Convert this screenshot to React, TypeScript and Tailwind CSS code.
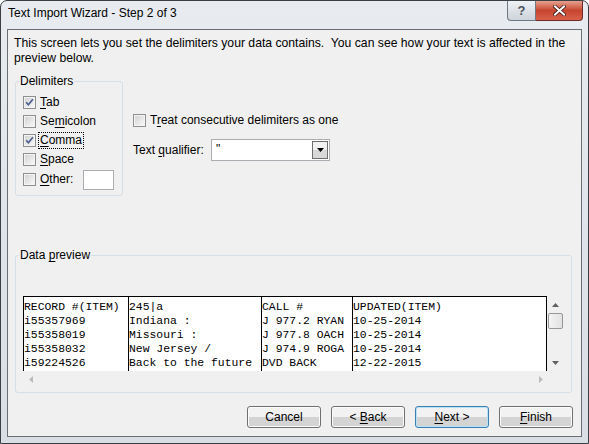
import React from "react";

const ui = "font-['Liberation_Sans',Arial,sans-serif] text-[12px] leading-[15px] text-black";
const mono = "font-['Liberation_Mono','Courier_New',monospace] text-[11.4px] leading-[14px] text-black";

const preview = [
  ["RECORD #(ITEM)", "245|a", "CALL #", "UPDATED(ITEM)"],
  ["i55357969", "Indiana :", "J 977.2 RYAN", "10-25-2014"],
  ["i55358019", "Missouri :", "J 977.8 OACH", "10-25-2014"],
  ["i55358032", "New Jersey /", "J 974.9 ROGA", "10-25-2014"],
  ["i59224526", "Back to the future", "DVD BACK", "12-22-2015"],
];

function Checkbox({ checked }: { checked?: boolean }) {
  return (
    <span className="flex h-[13px] w-[13px] shrink-0 border border-[#8e8f8f] bg-[#f4f4f4] p-[1px]">
      <span className="flex flex-1 items-center justify-center bg-gradient-to-br from-[#d4d4d4] to-[#f7f7f7]">
        {checked && (
          <svg width="9" height="9" viewBox="0 0 9 9">
            <path d="M1.2 4.3 L3.4 6.8 L7.9 1.2" stroke="#4c5f90" strokeWidth="1.7" fill="none" />
          </svg>
        )}
      </span>
    </span>
  );
}

function CheckRow({ u, rest, pre = "", checked, focus }: { u: string; rest: string; pre?: string; checked?: boolean; focus?: boolean }) {
  return (
    <div className="flex h-[19px] items-center">
      <Checkbox checked={checked} />
      <span className={`ml-[3px] px-[1px] ${focus ? "outline outline-1 outline-dotted outline-black" : ""}`}>
        {pre}
        <u className="underline-offset-2">{u}</u>
        {rest}
      </span>
    </div>
  );
}

function Arrow({ dir, color = "#606060" }: { dir: "up" | "down" | "left" | "right"; color?: string }) {
  const d = {
    up: "M0 4 L3.5 0 L7 4 Z",
    down: "M0 0 L7 0 L3.5 4 Z",
    left: "M4 0 L4 7 L0 3.5 Z",
    right: "M0 0 L4 3.5 L0 7 Z",
  }[dir];
  const vert = dir === "up" || dir === "down";
  return (
    <svg width={vert ? 7 : 4} height={vert ? 4 : 7} viewBox={vert ? "0 0 7 4" : "0 0 4 7"}>
      <path d={d} fill={color} />
    </svg>
  );
}

function Button({ children, primary }: { children: React.ReactNode; primary?: boolean }) {
  return (
    <div
      className={`flex h-[22px] w-[74px] items-center justify-center rounded-[3px] border ${
        primary ? "border-[#3c7fb1] shadow-[inset_0_0_0_1px_#b5e4f8]" : "border-[#707070] shadow-[inset_0_0_0_1px_#fcfcfc]"
      } bg-gradient-to-b from-[#f2f2f2] from-50% to-[#d4d4d4] to-50%`}
    >
      <span>{children}</span>
    </div>
  );
}

export default function App() {
  return (
    <div className={`h-[444px] w-[589px] bg-white ${ui}`}>
      <div className="flex h-full flex-col rounded-t-[7px] border border-[#3b3f44] bg-gradient-to-b from-[#e8ecf0] via-[#dfe4ea] to-[#d9dee4]">
        {/* title bar */}
        <div className="flex h-[28px] justify-between pl-[7px] pr-[5px]">
          <div className="pt-[5px]">Text Import Wizard - Step 2 of 3</div>
          <div className="flex h-[20px] items-stretch">
            <div className="flex w-[29px] items-center justify-center rounded-bl-[4px] border border-t-0 border-[#6f7780] bg-gradient-to-b from-[#eef1f4] to-[#cdd3da] text-[13px] font-bold text-[#4a5260]">
              ?
            </div>
            <div className="flex w-[47px] items-center justify-center rounded-br-[4px] border border-l-0 border-t-0 border-[#6e2a24] bg-gradient-to-b from-[#e5a08f] via-[#c7452f] to-[#d9604a]">
              <svg width="13" height="11" viewBox="0 0 13 11">
                <path d="M2 1.5 L11 9.5 M11 1.5 L2 9.5" stroke="#3b1a16" strokeWidth="3.6" strokeLinecap="square" />
                <path d="M2 1.5 L11 9.5 M11 1.5 L2 9.5" stroke="#ffffff" strokeWidth="2" strokeLinecap="square" />
              </svg>
            </div>
          </div>
        </div>

        {/* client area */}
        <div className="mx-[6px] mb-[6px] flex flex-1 flex-col border border-[#6b6f74] bg-[#f0f0f0]">
          <p className="px-[6px] pt-[6px] text-[12.2px]">
            This screen lets you set the delimiters your data contains.&nbsp; You can see how your text is affected in the
            <br />
            preview below.
          </p>

          <div className="mt-[8px] flex">
            <fieldset className="ml-[7px] w-[108px] rounded-[3px] border border-[#d5dfe5] pb-[5px] pl-[7px] pt-[4px]">
              <legend className="-ml-[4px] px-[1px]">Delimiters</legend>
              <CheckRow u="T" rest="ab" checked />
              <CheckRow pre="Se" u="m" rest="icolon" />
              <CheckRow u="C" rest="omma" checked focus />
              <CheckRow u="S" rest="pace" />
              <div className="flex h-[21px] items-center">
                <Checkbox />
                <span className="ml-[3px] px-[1px]">
                  <u className="underline-offset-2">O</u>ther:
                </span>
                <div className="ml-[9px] h-[20px] w-[31px] border border-[#abadb3] bg-white" />
              </div>
            </fieldset>

            <div className="ml-[10px] flex flex-col pt-[37px]">
              <div className="flex h-[19px] items-center">
                <Checkbox />
                <span className="ml-[4px]">
                  T<u className="underline-offset-2">r</u>eat consecutive delimiters as one
                </span>
              </div>
              <div className="mt-[9px] flex items-center">
                <span className="w-[78px]">
                  Text <u className="underline-offset-2">q</u>ualifier:
                </span>
                <div className="flex h-[22px] w-[119px] border border-[#abadb3] bg-white">
                  <span className="flex-1 pl-[4px] pt-[2px]">"</span>
                  <div className="m-[1px] flex w-[16px] items-center justify-center border border-[#707070] bg-gradient-to-b from-[#f2f2f2] from-50% to-[#d8d8d8] to-50%">
                    <Arrow dir="down" color="#000" />
                  </div>
                </div>
              </div>
            </div>
          </div>

          <fieldset className="ml-[7px] mr-[9px] mt-[52px] rounded-[3px] border border-[#d5dfe5] px-[7px] pb-[4px] pt-[33px]">
            <legend className="-ml-[4px] px-[1px]">
              Data <u className="underline-offset-2">p</u>review
            </legend>
            <div className="flex h-[75px]">
              <div className={`grid h-full flex-1 grid-cols-[104px_133px_91px_1fr] overflow-hidden border border-b-0 border-black bg-white pt-[3px] ${mono}`}>
                {[0, 1, 2, 3].map((c) => (
                  <div key={c} className={`${c > 0 ? "-mt-[3px] border-l border-black pt-[3px]" : ""} whitespace-pre`}>
                    {preview.map((r, i) => (
                      <div key={i}>{r[c]}</div>
                    ))}
                  </div>
                ))}
              </div>
              <div className="flex w-[17px] flex-col items-center bg-[#f0f0f0]">
                <div className="flex h-[17px] w-full items-center justify-center">
                  <Arrow dir="up" />
                </div>
                <div className="h-[16px] w-[15px] rounded-[2px] border border-[#979797] bg-gradient-to-r from-[#f3f3f3] to-[#e2e2e2]" />
                <div className="flex-1" />
                <div className="flex h-[17px] w-full items-center justify-center">
                  <Arrow dir="down" />
                </div>
              </div>
            </div>
            <div className="flex h-[17px] w-[526px] items-center justify-between px-[6px]">
              <Arrow dir="left" color="#bcbcbc" />
              <Arrow dir="right" color="#bcbcbc" />
            </div>
          </fieldset>

          <div className="mt-[13px] flex justify-end gap-[10px] pr-[8px]">
            <Button>Cancel</Button>
            <Button>
              &lt; <u className="underline-offset-2">B</u>ack
            </Button>
            <Button primary>
              <u className="underline-offset-2">N</u>ext &gt;
            </Button>
            <Button>
              <u className="underline-offset-2">F</u>inish
            </Button>
          </div>
        </div>
      </div>
    </div>
  );
}
